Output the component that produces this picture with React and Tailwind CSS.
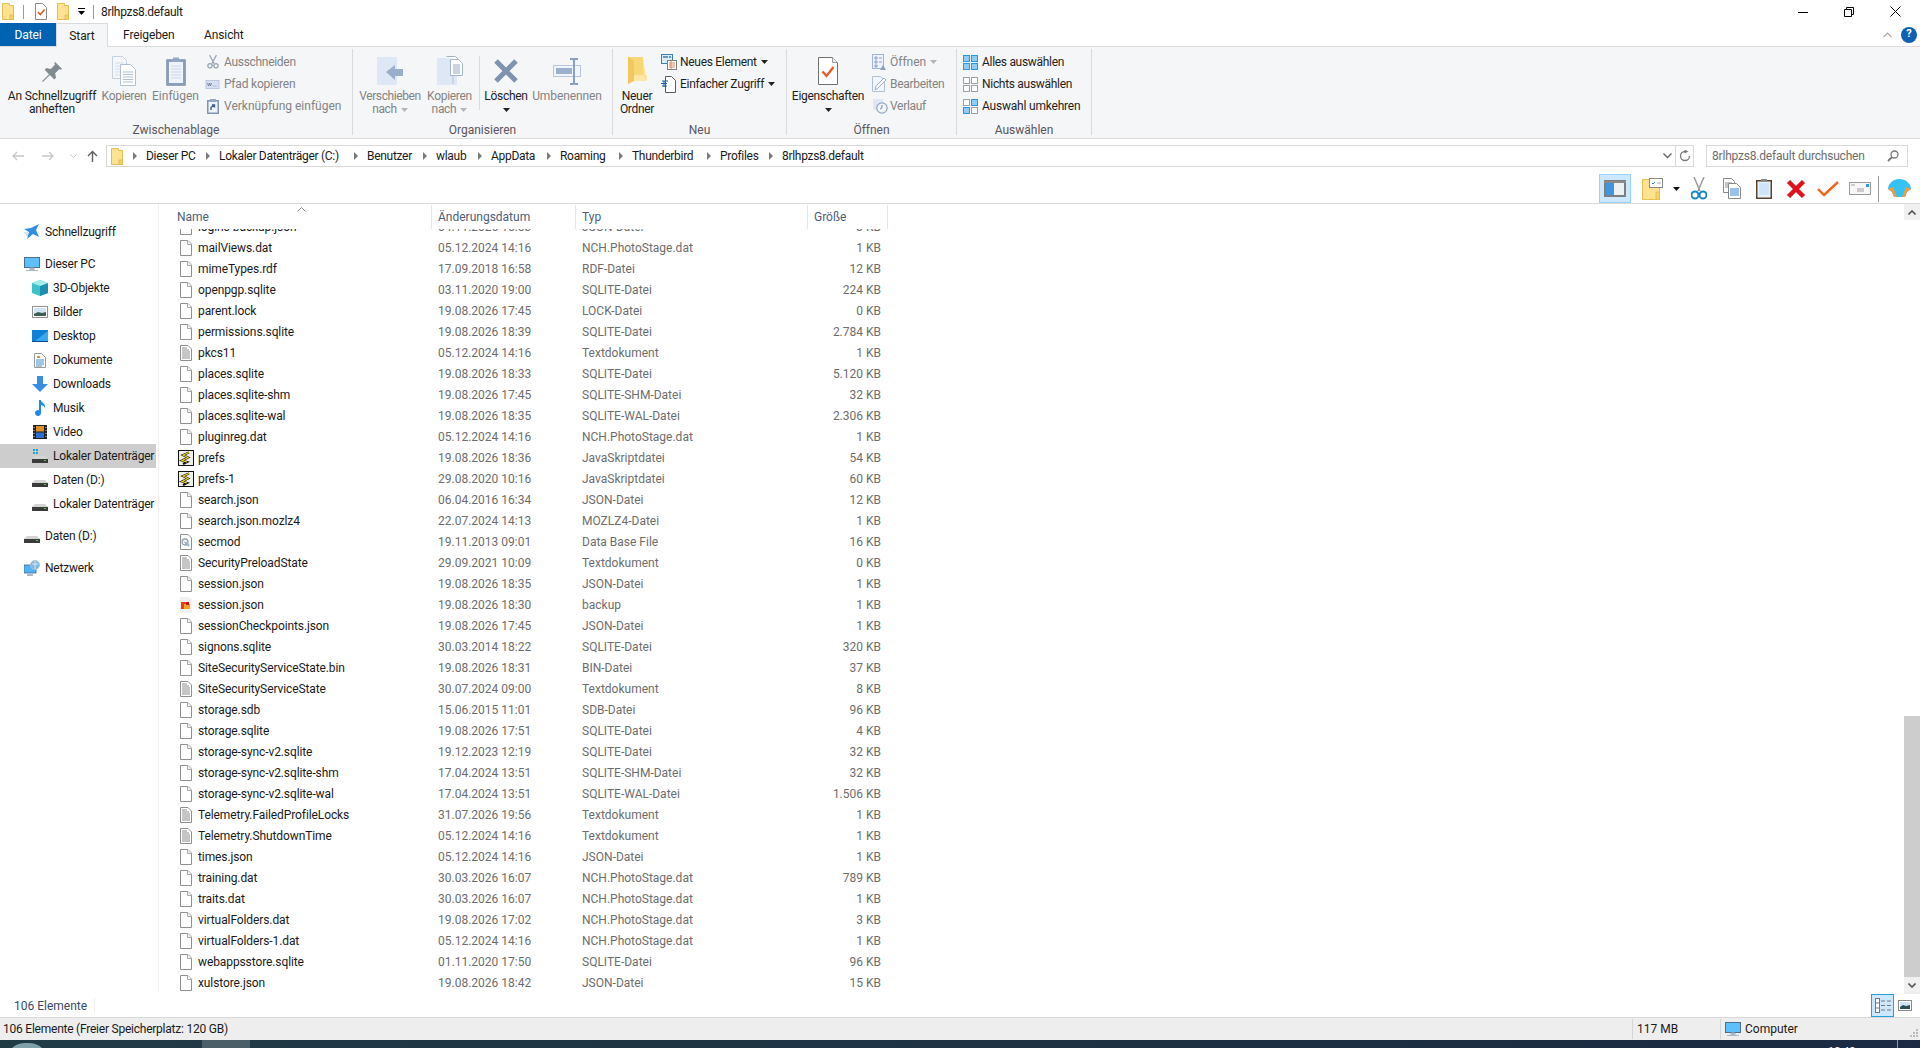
import React from "react";

const I = ({ w, h, vw, vh, children, className = "" }) => (
  <svg width={w} height={h} viewBox={`0 0 ${vw || w} ${vh || h}`} className={`shrink-0 block ${className}`} shapeRendering="geometricPrecision">{children}</svg>
);

const FolderTall = () => (
  <I w={12} h={17}>
    <path d="M.5.5h7v2h4v14h-11z" fill="#fde28f" stroke="#e5bd55" />
    <path d="M8 12h3.500v4.500H8z" fill="#f6cf66" stroke="#e5bd55" />
  </I>
);
const DocCheck = () => (
  <I w={12} h={17}>
    <path d="M.5.5h7l4 4v12H.5z" fill="#fff" stroke="#8a8a8a" />
    <path d="M3 9l2.300 2.500L9.500 6.500" fill="none" stroke="#e8541e" strokeWidth="1.500" />
  </I>
);
const Caret = ({ c = "#222" }) => (
  <I w={7} h={4}><path d="M0 0h7L3.500 4z" fill={c} /></I>
);

const FileIcon = () => (
  <I w={16} h={16}>
    <path d="M2.500.5h7.500l3.500 3.500v11.500h-11z" fill="#fff" stroke="#8f8f8f" />
    <path d="M9.500.5v4h4" fill="#f3f3f3" stroke="#a8a8a8" />
  </I>
);
const TextIcon = () => (
  <I w={16} h={16}>
    <path d="M2.500.5h7.500l3.500 3.500v11.500h-11z" fill="#fff" stroke="#8f8f8f" />
    <path d="M4 5h7M4 7h8M4 9h8M4 11h8M4 13h8" stroke="#8c8c8c" />
    <path d="M4 3h5" stroke="#8c8c8c" />
  </I>
);
const JsIcon = () => (
  <I w={16} h={16}>
    <rect x=".5" y=".5" width="15" height="15" fill="#eeeeee" stroke="#111" />
    <path d="M11 2.500L5 5l5 2.500-6 3 5 1.500-4 2" fill="none" stroke="#111" strokeWidth="2.200" />
    <path d="M11 2.500L5 5l5 2.500-6 3 5 1.500" fill="none" stroke="#f2de1a" strokeWidth="1.100" />
  </I>
);
const DbIcon = () => (
  <I w={16} h={16}>
    <path d="M2.500.5h7.500l3.500 3.500v11.500h-11z" fill="#fff" stroke="#8f8f8f" />
    <circle cx="7" cy="8" r="3" fill="none" stroke="#9aa3ad" strokeWidth="1.300" />
    <path d="M7 8l4 4" stroke="#8ab4dc" strokeWidth="2" />
    <path d="M5 6.500l3.500 3.500" stroke="#b8b8b8" />
  </I>
);
const BackupIcon = () => (
  <I w={16} h={16}>
    <path d="M2 0h9l3 3v13H2z" fill="#f1f1f1" />
    <rect x="3" y="5" width="8" height="7" fill="#f03d10" />
    <rect x="6" y="7" width="6" height="5" fill="#f5a02a" />
    <rect x="8" y="5" width="3" height="3" fill="#c8140f" />
  </I>
);

const fileIcons = { f: FileIcon, t: TextIcon, j: JsIcon, d: DbIcon, b: BackupIcon };

const N = "NCH.PhotoStage.dat", S = "SQLITE-Datei", SH = "SQLITE-SHM-Datei", SW = "SQLITE-WAL-Datei", J = "JSON-Datei", T = "Textdokument", JS = "JavaSkriptdatei";
const files = [
  ["logins-backup.json", "04.11.2026 15:03", J, "3 KB"],
  ["mailViews.dat", "05.12.2024 14:16", N, "1 KB"],
  ["mimeTypes.rdf", "17.09.2018 16:58", "RDF-Datei", "12 KB"],
  ["openpgp.sqlite", "03.11.2020 19:00", S, "224 KB"],
  ["parent.lock", "19.08.2026 17:45", "LOCK-Datei", "0 KB"],
  ["permissions.sqlite", "19.08.2026 18:39", S, "2.784 KB"],
  ["pkcs11", "05.12.2024 14:16", T, "1 KB", "t"],
  ["places.sqlite", "19.08.2026 18:33", S, "5.120 KB"],
  ["places.sqlite-shm", "19.08.2026 17:45", SH, "32 KB"],
  ["places.sqlite-wal", "19.08.2026 18:35", SW, "2.306 KB"],
  ["pluginreg.dat", "05.12.2024 14:16", N, "1 KB"],
  ["prefs", "19.08.2026 18:36", JS, "54 KB", "j"],
  ["prefs-1", "29.08.2020 10:16", JS, "60 KB", "j"],
  ["search.json", "06.04.2016 16:34", J, "12 KB"],
  ["search.json.mozlz4", "22.07.2024 14:13", "MOZLZ4-Datei", "1 KB"],
  ["secmod", "19.11.2013 09:01", "Data Base File", "16 KB", "d"],
  ["SecurityPreloadState", "29.09.2021 10:09", T, "0 KB", "t"],
  ["session.json", "19.08.2026 18:35", J, "1 KB"],
  ["session.json", "19.08.2026 18:30", "backup", "1 KB", "b"],
  ["sessionCheckpoints.json", "19.08.2026 17:45", J, "1 KB"],
  ["signons.sqlite", "30.03.2014 18:22", S, "320 KB"],
  ["SiteSecurityServiceState.bin", "19.08.2026 18:31", "BIN-Datei", "37 KB"],
  ["SiteSecurityServiceState", "30.07.2024 09:00", T, "8 KB", "t"],
  ["storage.sdb", "15.06.2015 11:01", "SDB-Datei", "96 KB"],
  ["storage.sqlite", "19.08.2026 17:51", S, "4 KB"],
  ["storage-sync-v2.sqlite", "19.12.2023 12:19", S, "32 KB"],
  ["storage-sync-v2.sqlite-shm", "17.04.2024 13:51", SH, "32 KB"],
  ["storage-sync-v2.sqlite-wal", "17.04.2024 13:51", SW, "1.506 KB"],
  ["Telemetry.FailedProfileLocks", "31.07.2026 19:56", T, "1 KB", "t"],
  ["Telemetry.ShutdownTime", "05.12.2024 14:16", T, "1 KB", "t"],
  ["times.json", "05.12.2024 14:16", J, "1 KB"],
  ["training.dat", "30.03.2026 16:07", N, "789 KB"],
  ["traits.dat", "30.03.2026 16:07", N, "1 KB"],
  ["virtualFolders.dat", "19.08.2026 17:02", N, "3 KB"],
  ["virtualFolders-1.dat", "05.12.2024 14:16", N, "1 KB"],
  ["webappsstore.sqlite", "01.11.2020 17:50", S, "96 KB"],
  ["xulstore.json", "19.08.2026 18:42", J, "15 KB"],
];

/* ribbon big icons */
const Pin = () => (
  <I w={21} h={21} vw={24} vh={24}>
    <path d="M15 1l8 8-2 1-1-1-5 5 1 5-2 2-5-5-8 8-1-1 8-8-5-5 2-2 5 1 5-5-1-1z" fill="#7f8b8f" />
  </I>
);
const CopyBig = () => (
  <I w={24} h={30}>
    <path d="M.5.5h10l4 4v18H.5z" fill="#f4f7fc" stroke="#c4d1e3" />
    <path d="M3 7h9M3 10h9M3 13h9M3 16h9M3 19h9" stroke="#d3deec" />
    <path d="M8.500 8.500h10l5 5v16h-15z" fill="#fff" stroke="#afc0d6" />
    <path d="M11 16h10M11 18.500h10M11 21h10M11 23.500h10M11 26h10" stroke="#afc0d6" />
  </I>
);
const ClipBig = () => (
  <I w={20} h={30}>
    <rect x=".75" y="3.750" width="18.500" height="25.500" fill="#8aa0bd" stroke="#8094b0" />
    <rect x="3" y="6" width="14" height="21" fill="#eef3fb" />
    <path d="M5 10h10M5 13h10M5 16h10M5 19h10M5 22h10" stroke="#cbd7e8" />
    <path d="M7 4V1.500h6V4h2v2H5V4z" fill="#93a8c4" />
  </I>
);
const ScissorsSm = ({ c = "#98a6b4" }) => (
  <I w={12} h={16} vw={14} vh={16}>
    <path d="M3 0l5.500 10M11 0L5.500 10" stroke={c} strokeWidth="1.400" fill="none" />
    <circle cx="3.500" cy="12.500" r="2.500" fill="none" stroke={c} strokeWidth="1.500" />
    <circle cx="10.500" cy="12.500" r="2.500" fill="none" stroke={c} strokeWidth="1.500" />
  </I>
);
const PathSm = () => (
  <I w={15} h={9} vw={14} vh={9}>
    <rect x=".5" y=".5" width="13" height="8" fill="#d6e2f2" stroke="#b9c8dc" />
    <path d="M2 3l1 3 1-3 1 3 1-3M8 6h.800M10 6h.800" stroke="#5e7695" fill="none" strokeWidth=".8" />
  </I>
);
const LinkSm = () => (
  <I w={12} h={16}>
    <rect x=".75" y="2.750" width="10.500" height="12.500" fill="#eef3fb" stroke="#7f94b0" strokeWidth="1.500" />
    <rect x="3" y="1" width="6" height="3" fill="#93a8c4" />
    <path d="M4 12V9.500L7 7M5 7h2.500v2.500" stroke="#3e5f88" fill="none" strokeWidth="1.400" />
  </I>
);
const MoveBig = () => (
  <I w={26} h={28}>
    <path d="M0 0h20v28H0z" fill="#dde7f5" />
    <path d="M9 15l9-7v4h8v7h-8v4z" fill="#98aecb" />
  </I>
);
const CopyToBig = () => (
  <I w={26} h={30}>
    <path d="M0 2h20v27H0z" fill="#dde7f5" />
    <path d="M17 3h-2v25h2z" fill="#c7d6e9" />
    <path d="M9.500 .5h9l3 3v4.500" fill="#fff" stroke="#a4b6cf" />
    <path d="M13.500 3.500h8l4 4v12h-12z" fill="#fff" stroke="#a4b6cf" />
    <path d="M16 9h7M16 11h7M16 13h7M16 15h7M16 17h7" stroke="#93a8c4" />
  </I>
);
const XBig = () => (
  <I w={26} h={26}>
    <path d="M3 3l20 20M23 3L3 23" stroke="#7f93ae" strokeWidth="5" />
  </I>
);
const RenameBig = () => (
  <I w={28} h={27}>
    <rect x=".5" y="7.500" width="27" height="11" fill="#f2f6fc" stroke="#b6c7dd" />
    <rect x="3" y="10" width="16" height="6" fill="#9ab0cc" />
    <path d="M17 1h3l1 1 1-1h3M21 2v23M17 26h3l1-1 1 1h3" stroke="#88a0bd" fill="none" strokeWidth="2" />
  </I>
);
const FolderBig = () => (
  <I w={20} h={28}>
    <path d="M1 0h15v24H6l-5 3z" fill="#f7d777" />
    <path d="M1 0l6 4v20l-6 3z" fill="#f2c75c" />
    <path d="M7 18h13v6H7z" fill="#fbe6a4" />
    <path d="M16 0v18l3 4" fill="#fbe28f" />
  </I>
);
const NewItem = () => (
  <I w={16} h={16}>
    <rect x=".5" y=".5" width="11" height="9" fill="#d8ecfa" stroke="#3d7fa8" />
    <path d="M2 3h5M8 3h2" stroke="#3d7fa8" strokeWidth="1.500" />
    <rect x="6.500" y="6.500" width="9" height="9" fill="#fff" stroke="#7f7f7f" />
    <path d="M8 9h6M8 11h6M8 13h6M10 7v8" stroke="#d88c6a" />
  </I>
);
const EasyAccess = () => (
  <I w={15} h={17}>
    <path d="M4.500 .5h6l4 4v12h-10z" fill="#fff" stroke="#5a5a5a" />
    <path d="M1 5h6M0 7.500h6M1 10h5M3 5v6" stroke="#1d5fa3" />
  </I>
);
const PropsBig = () => (
  <I w={20} h={28}>
    <path d="M.5.5h14l5 5v22H.5z" fill="#fff" stroke="#6f6f6f" />
    <path d="M14.500 .5v5h5" fill="#efefef" stroke="#9a9a9a" />
    <path d="M4.500 14.500l4 4.500 7-9" fill="none" stroke="#f0561d" strokeWidth="2.200" />
  </I>
);
const OpenSm = () => (
  <I w={14} h={16}>
    <rect x=".5" y=".5" width="11" height="14" fill="#eef3fb" stroke="#a4b6cf" />
    <path d="M3 3h2v2H3zM3 7h2v2H3zM3 11h2v2H3zM7 4h3M7 8h3" stroke="#8aa0bd" fill="none" />
    <path d="M8 16l3-5 3 5z" fill="#8aa0bd" />
  </I>
);
const EditSm = () => (
  <I w={14} h={16}>
    <path d="M.5.5h8l4 4v11H.5z" fill="#f2f6fc" stroke="#b0c0d6" />
    <path d="M3 14l1-4 8-8 2 2-8 8z" fill="#fff" stroke="#9bb0ca" />
  </I>
);
const HistorySm = () => (
  <I w={16} h={16}>
    <rect x="1" y="1" width="10" height="11" fill="#dde7f5" />
    <circle cx="10" cy="10" r="5.200" fill="#f2f6fc" stroke="#93a5bb" strokeWidth="1.200" />
    <path d="M10 7v3l-2 1" stroke="#7c8fa6" fill="none" />
  </I>
);
const SelectIcon = ({ on }) => {
  const cells = [[0, 0], [8, 0], [0, 8], [8, 8]];
  return (
    <I w={15} h={15}>
      {cells.map(([x, y], i) =>
        on.includes(i) ? (
          <rect key={i} x={x + 0.5} y={y + 0.5} width="6" height="6" fill="#8fcdf7" stroke="#2a97e3" />
        ) : (
          <rect key={i} x={x + 0.5} y={y + 0.5} width="6" height="6" fill="#fff" stroke="#a0a0a0" />
        )
      )}
    </I>
  );
};

const Big = ({ w, ml = "", icon, a, b, dim, caret, tr = "tracking-[-0.3px]" }) => (
  <div className={`flex flex-col items-center shrink-0 pt-[5px] ${tr} ${w} ${ml} ${dim ? "text-[#838383]" : "text-[#1e1e1e]"}`}>
    <div className="h-[38px] flex items-center justify-center">{icon}</div>
    <div className="h-[13px] leading-[13px] whitespace-nowrap">{a}</div>
    <div className="h-[13px] leading-[13px] whitespace-nowrap flex items-center gap-1">
      {b}
      {caret && <Caret c={dim ? "#b5b5b5" : "#222"} />}
    </div>
  </div>
);

const Small = ({ icon, text, dim, w, caret, tr = "tracking-[-0.3px]" }) => (
  <div className={`h-[22px] flex items-center whitespace-nowrap ${tr} ${dim ? "text-[#838383]" : "text-[#1e1e1e]"}`}>
    <div className={`${w} flex items-center shrink-0`}>{icon}</div>
    {text}
    {caret && <span className="ml-[4px]"><Caret c={caret} /></span>}
  </div>
);

const Group = ({ w, label, children }) => (
  <div className={`${w} shrink-0 h-full flex flex-col`}>
    <div className="h-[75px] flex">{children}</div>
    <div className="h-[16px] flex items-center justify-center text-[#5a5560]">{label}</div>
  </div>
);
const GroupSep = () => <div className="w-px h-[86px] mt-[2px] bg-[#dadbdc] shrink-0" />;

const Chev = () => (
  <I w={5} h={8}><path d="M1 0l4 4-4 4z" fill="#7a7a7a" /></I>
);

const crumbs = [
  ["Dieser PC", "w-[73px]"],
  ["Lokaler Datenträger (C:)", "w-[148px]"],
  ["Benutzer", "w-[69px]"],
  ["wlaub", "w-[55px]"],
  ["AppData", "w-[69px]"],
  ["Roaming", "w-[72px]"],
  ["Thunderbird", "w-[88px]"],
  ["Profiles", "w-[62px]"],
  ["8rlhpzs8.default", "w-[100px]"],
];

const Star = () => (
  <I w={16} h={16}><path d="M15 0l-3 6 3 7-6-3-6 5 2-7-5-3 7-1z" fill="#2f8de4" /><path d="M4 9H0M4 11H2" stroke="#9cc9f0" /></I>
);
const Monitor = () => (
  <I w={16} h={15}>
    <rect x=".5" y=".5" width="15" height="10" fill="#5dc0fb" stroke="#4d6f8c" />
    <path d="M6 11h4v2H6zM2 13.500h12" stroke="#a5b8c8" fill="#a5b8c8" />
  </I>
);
const Cube = () => (
  <I w={16} h={16}><path d="M8 0l8 3v10l-8 3-8-3V3z" fill="#3cc3c9" /><path d="M8 6l8-3v10l-8 3z" fill="#1a8fb0" /><path d="M8 0l8 3-8 3-8-3z" fill="#a5ecec" /></I>
);
const Pic = () => (
  <I w={16} h={12}><rect x=".5" y=".5" width="15" height="11" fill="#fff" stroke="#8f8f8f" /><rect x="2" y="2" width="12" height="8" fill="#cfe4f5" /><path d="M2 8l4-2 4 1 4-1v4H2z" fill="#3f5f52" /></I>
);
const Desk = () => (
  <I w={16} h={12}><rect width="16" height="12" fill="#0f7fd8" /><path d="M16 1v10H3z" fill="#37a8f5" /><path d="M0 11h16v1H0z" fill="#0a4f8c" /></I>
);
const DocS = () => (
  <I w={12} h={15}><path d="M.5.5h7l4 4v10H.5z" fill="#fff" stroke="#9a9a9a" /><path d="M2 7h8M2 9h8M2 11h8M2 13h6" stroke="#3f8fd0" /><path d="M3 3h3v2H3z" fill="#e48a3c" /></I>
);
const Down = () => (
  <I w={16} h={16}><path d="M5 0h6v8h5l-8 8-8-8h5z" fill="#3a8ee0" /></I>
);
const Note = () => (
  <I w={11} h={16}><path d="M4 0h2c0 3 5 3 4 8-1-2-3-3-4-3v8a3 3 0 11-2-2.800z" fill="#1b8be6" /></I>
);
const Film = () => (
  <I w={14} h={14}><rect width="14" height="14" fill="#222" /><rect x="3" y="1" width="8" height="5.500" fill="#e08f2a" /><rect x="3" y="7.500" width="8" height="5.500" fill="#2c6fd0" /><path d="M1 2v1M1 5v1M1 8v1M1 11v1M13 2v1M13 5v1M13 8v1M13 11v1" stroke="#ddd" /></I>
);
const Drive = ({ win }) => (
  <I w={16} h={16}>
    {win && <path d="M1 1h2v2H1zM4 1h2v2H4zM1 4h2v2H1zM4 4h2v2H4z" fill="#1f9ce8" />}
    <path d="M3 8h10l3 3H0z" fill="#d4d4d4" />
    <rect y="11" width="16" height="4" fill="#3b3b3b" />
    <path d="M12 12.500h2" stroke="#39d353" />
  </I>
);
const Net = () => (
  <I w={16} h={16}>
    <rect x="0" y="5" width="12" height="8" fill="#4fb4f5" stroke="#41698c" strokeWidth=".8" />
    <path d="M3 15h6" stroke="#8fa3b5" strokeWidth="1.500" />
    <circle cx="11" cy="5" r="4.500" fill="#7fb8dd" stroke="#a9c6da" />
    <path d="M8 4h6M11 1v8" stroke="#d9e9f3" />
  </I>
);

const nav = [
  [1, "Schnellzugriff", <Star />, "mt-[16px]"],
  [1, "Dieser PC", <Monitor />, "mt-[8px]"],
  [2, "3D-Objekte", <Cube />],
  [2, "Bilder", <Pic />],
  [2, "Desktop", <Desk />],
  [2, "Dokumente", <DocS />],
  [2, "Downloads", <Down />],
  [2, "Musik", <Note />],
  [2, "Video", <Film />],
  [2, "Lokaler Datenträger", <Drive win />, "", true],
  [2, "Daten (D:)", <Drive />],
  [2, "Lokaler Datenträger", <Drive />],
  [1, "Daten (D:)", <Drive />, "mt-[8px]"],
  [1, "Netzwerk", <Net />, "mt-[8px]"],
];

const cols = {
  a: "w-[273px]",
  b: "w-[144px]",
  c: "w-[232px]",
  d: "w-[80px]",
};

const Head = ({ w, children, pl = "pl-[6px]" }) => (
  <div className={`${w} ${pl} h-[24px] mt-px flex items-center border-r border-[#e5e5e5] text-[#4c607a] shrink-0 relative`}>{children}</div>
);

const TB = ({ children, w, ml }) => <div className={`${w} ${ml} flex items-center justify-center shrink-0`}>{children}</div>;

export default function App() {
  return (
    <div className="w-[1920px] h-[1048px] flex flex-col overflow-hidden bg-white text-[12px] text-[#1a1a1a] [font-family:Roboto,sans-serif]">
      {/* title bar */}
      <div className="h-[23px] flex items-center shrink-0">
        <div className="ml-[2px]"><FolderTall /></div>
        <div className="ml-[9px] w-px h-[14px] bg-[#9a9a9a]" />
        <div className="ml-[11px]"><DocCheck /></div>
        <div className="ml-[10px]"><FolderTall /></div>
        <div className="ml-[9px] flex flex-col items-center gap-[2px]">
          <div className="w-[7px] h-px bg-black" />
          <Caret c="#000" />
        </div>
        <div className="ml-[8px] w-px h-[14px] bg-[#9a9a9a]" />
        <div className="ml-[7px] tracking-[-0.3px]">8rlhpzs8.default</div>
        <div className="ml-auto flex items-center">
          <div className="w-[46px] flex justify-center"><I w={10} h={10}><path d="M0 5.500h10" stroke="#000" /></I></div>
          <div className="w-[46px] flex justify-center"><I w={10} h={10}><path d="M.5 2.500h7v7h-7zM2.500 2.500v-2h7v7h-2" fill="none" stroke="#000" /></I></div>
          <div className="w-[46px] flex justify-center mr-[2px]"><I w={11} h={11}><path d="M.5.5l10 10M10.500.5l-10 10" stroke="#000" /></I></div>
        </div>
      </div>

      {/* tabs */}
      <div className="h-[23px] flex items-stretch shrink-0 tracking-[-0.1px]">
        <div className="w-[56px] bg-[#0063b1] text-white flex items-center justify-center">Datei</div>
        <div className="w-[52px] h-[24px] bg-[#f5f6f7] border border-b-0 border-[#dadbdc] flex items-center justify-center z-10">Start</div>
        <div className="ml-[15px] w-[81px] flex items-center">Freigeben</div>
        <div className="flex items-center">Ansicht</div>
        <div className="ml-auto flex items-center">
          <I w={9} h={6}><path d="M.5 5L4.500 1l4 4" stroke="#a8a8a8" fill="none" strokeWidth="1.200" /></I>
          <div className="ml-[9px] mr-[3px] w-[16px] h-[16px] rounded-full bg-[#0f5fb5] text-white flex items-center justify-center text-[11px] font-bold">?</div>
        </div>
      </div>

      {/* ribbon */}
      <div className="h-[93px] bg-[#f5f6f7] border-y border-[#dadbdc] flex shrink-0">
        <Group w="w-[352px]" label="Zwischenablage">
          <Big w="w-[104px]" icon={<Pin />} a="An Schnellzugriff" b="anheften" tr="tracking-[-0.15px]" />
          <Big w="w-[40px]" icon={<CopyBig />} a="Kopieren" dim />
          <Big w="w-[63px]" icon={<ClipBig />} a="Einfügen" dim tr="tracking-normal" />
          <div className="pt-[4px]">
            <Small w="w-[17px]" dim text="Ausschneiden" icon={<ScissorsSm />} />
            <Small w="w-[17px]" dim text="Pfad kopieren" icon={<span className="-ml-[2px]"><PathSm /></span>} tr="tracking-[-0.2px]" />
            <Small w="w-[17px]" dim text="Verknüpfung einfügen" icon={<LinkSm />} tr="tracking-normal" />
          </div>
        </Group>
        <GroupSep />
        <Group w="w-[259px]" label="Organisieren">
          <Big w="w-[74px]" icon={<MoveBig />} a="Verschieben" b="nach" dim caret tr="tracking-[-0.4px]" />
          <Big w="w-[45px]" icon={<CopyToBig />} a="Kopieren" b="nach" dim caret />
          <div className="ml-[7px] w-px h-[54px] mt-[9px] bg-[#dadbdc]" />
          <Big w="w-[52px]" icon={<XBig />} a="Löschen" b={<Caret />} />
          <Big w="w-[70px]" icon={<RenameBig />} a="Umbenennen" dim tr="tracking-[-0.1px]" />
        </Group>
        <GroupSep />
        <Group w="w-[173px]" label="Neu">
          <Big w="w-[48px]" icon={<FolderBig />} a="Neuer" b="Ordner" />
          <div className="pt-[4px]">
            <Small w="w-[19px]" text="Neues Element" icon={<NewItem />} caret="#222" />
            <Small w="w-[19px]" text="Einfacher Zugriff" icon={<EasyAccess />} caret="#222" />
          </div>
        </Group>
        <GroupSep />
        <Group w="w-[169px]" label="Öffnen">
          <Big w="w-[82px]" icon={<PropsBig />} a="Eigenschaften" b={<Caret />} />
          <div className="ml-[3px] pt-[4px]">
            <Small w="w-[18px]" dim text="Öffnen" icon={<OpenSm />} caret="#b5b5b5" tr="tracking-normal" />
            <Small w="w-[18px]" dim text="Bearbeiten" icon={<EditSm />} />
            <Small w="w-[18px]" dim text="Verlauf" icon={<HistorySm />} />
          </div>
        </Group>
        <GroupSep />
        <Group w="w-[134px]" label="Auswählen">
          <div className="ml-[6px] pt-[4px]">
            <Small w="w-[19px]" text="Alles auswählen" icon={<SelectIcon on={[0, 1, 2, 3]} />} />
            <Small w="w-[19px]" text="Nichts auswählen" icon={<SelectIcon on={[]} />} />
            <Small w="w-[19px]" text="Auswahl umkehren" icon={<SelectIcon on={[1, 2]} />} tr="tracking-[-0.2px]" />
          </div>
        </Group>
        <GroupSep />
      </div>

      {/* address row */}
      <div className="h-[28px] flex pt-[6px] shrink-0">
        <div className="w-[106px] h-[22px] flex items-center shrink-0">
          <div className="ml-[12px]"><I w={12} h={10}><path d="M12 5H1M5 1L1 5l4 4" stroke="#c9c9c9" fill="none" strokeWidth="1.400" /></I></div>
          <div className="ml-[18px]"><I w={12} h={10}><path d="M0 5h11M7 1l4 4-4 4" stroke="#c9c9c9" fill="none" strokeWidth="1.400" /></I></div>
          <div className="ml-[16px]"><I w={7} h={4}><path d="M.5.5l3 3 3-3" stroke="#c9c9c9" fill="none" /></I></div>
          <div className="ml-[10px]"><I w={11} h={12}><path d="M5.500 12V1.500M1 6l4.500-4.500L10 6" stroke="#5f5f5f" fill="none" strokeWidth="1.400" /></I></div>
        </div>
        <div className="w-[1588px] h-[22px] border border-[#d9d9d9] flex items-center shrink-0 tracking-[-0.3px]">
          <div className="ml-[4px] mr-[7px]"><FolderTall /></div>
          {crumbs.map(([t, w], i) => (
            <div key={i} className={`${w} shrink-0 flex items-center whitespace-nowrap`}>
              <span className="w-[8px] shrink-0 flex justify-center mr-[8px]"><Chev /></span>
              {t}
            </div>
          ))}
          <div className="ml-auto flex items-center h-full">
            <I w={9} h={6} className="mr-[3px]"><path d="M.5.500l4 4 4-4" stroke="#666" fill="none" strokeWidth="1.400" /></I>
            <div className="w-px h-full bg-[#d9d9d9]" />
            <div className="w-[17px] flex justify-center">
              <I w={12} h={12}><path d="M6 1.500A4.500 4.500 0 1 0 10.500 6" stroke="#7a7a7a" fill="none" strokeWidth="1.300" /><path d="M5.500 -.5l4 2-4 2z" fill="#7a7a7a" /></I>
            </div>
          </div>
        </div>
        <div className="ml-[12px] w-[202px] h-[22px] border border-[#d9d9d9] flex items-center pl-[5px] text-[#6d6d6d] shrink-0 tracking-[-0.2px]">
          8rlhpzs8.default durchsuchen
          <I w={12} h={12} className="ml-auto mr-[8px]"><circle cx="7.500" cy="4.500" r="3.500" fill="none" stroke="#777" strokeWidth="1.300" /><path d="M5 7l-4 4" stroke="#777" strokeWidth="1.800" /></I>
        </div>
      </div>

      {/* custom toolbar */}
      <div className="h-[37px] flex items-end border-b border-[#dadada] shrink-0">
        <div className="ml-[1599px] w-[32px] h-[29px] bg-[#cce8ff] border border-[#99d1ff] flex items-center justify-center shrink-0">
          <I w={22} h={17}>
            <rect x="1" y="1" width="20" height="15" fill="#eef1f3" stroke="#7e7e7e" strokeWidth="2" />
            <rect x="2" y="3" width="8" height="12" fill="#3e97de" />
            <path d="M0 1h22v2H0z" fill="#8a8a8a" />
          </I>
        </div>
        <div className="h-[29px] flex items-center">
          <TB w="w-[21px]" ml="ml-[11px]">
            <I w={21} h={22}>
              <path d="M.5 1.500h12v2h5v18H.5z" fill="#fde28f" stroke="#e9c24d" />
              <path d="M14 14h3.500v7.500H14z" fill="#f7d265" stroke="#e9c24d" />
              <rect x="7.500" y=".5" width="13" height="9" fill="#fff" stroke="#8a8a8a" />
              <path d="M10 5l1 1 2-2" stroke="#2f86d8" fill="none" /><path d="M15 5h4" stroke="#aaa" />
            </I>
          </TB>
          <TB w="w-[7px]" ml="ml-[10px]"><Caret c="#111" /></TB>
          <TB w="w-[16px]" ml="ml-[11px]">
            <I w={16} h={23}>
              <path d="M3 0l6 14M13 0L7 14" stroke="#9b9b9b" strokeWidth="1.500" />
              <circle cx="4" cy="18" r="3.500" fill="none" stroke="#1a86c8" strokeWidth="2" />
              <circle cx="12" cy="18" r="3.500" fill="none" stroke="#1a86c8" strokeWidth="2" />
            </I>
          </TB>
          <TB w="w-[18px]" ml="ml-[16px]">
            <I w={18} h={21}>
              <path d="M.5.5h8l3 3v11H.5z" fill="#fff" stroke="#8a8a8a" />
              <path d="M2 5h7M2 7h7M2 9h7" stroke="#8a8a8a" />
              <path d="M5.500 5.500h8l4 4v11h-12z" fill="#fff" stroke="#8a8a8a" />
              <path d="M7 11h9M7 13h9M7 15h9M7 17h9" stroke="#3b83dc" />
            </I>
          </TB>
          <TB w="w-[16px]" ml="ml-[15px]">
            <I w={16} h={21}>
              <rect x=".75" y="2.750" width="14.500" height="17.500" fill="#e6f3fd" stroke="#5c432c" strokeWidth="1.500" />
              <path d="M3 6h10M3 8h10M3 10h10M3 12h10M3 14h10M3 16h10" stroke="#b8d6f0" />
              <rect x="5" y="1" width="6" height="3" fill="#8a8a8a" />
            </I>
          </TB>
          <TB w="w-[20px]" ml="ml-[14px]">
            <I w={20} h={20}><path d="M2.500 2.500l15 15M17.500 2.500l-15 15" stroke="#e0101c" strokeWidth="4.500" /></I>
          </TB>
          <TB w="w-[22px]" ml="ml-[11px]">
            <I w={22} h={16}><path d="M1 8l6 6L21 1" fill="none" stroke="#f0651a" strokeWidth="2.400" /></I>
          </TB>
          <TB w="w-[22px]" ml="ml-[10px]">
            <I w={22} h={13}>
              <rect x=".5" y=".5" width="21" height="12" fill="#f7f7f7" stroke="#9a9a9a" />
              <rect x="17" y="2" width="3" height="3" fill="#2f9ae8" />
              <path d="M2 3h4M8 7h7M8 9h7" stroke="#a0a0a0" />
            </I>
          </TB>
          <div className="ml-[7px] w-px h-[26px] bg-[#9a9a9a]" />
          <TB w="w-[23px]" ml="ml-[9px]">
            <I w={23} h={19}>
              <path d="M11.500 0C18 0 23 5 23 10l-4 3-2 5H6l-2-5-4-3C0 5 5 0 11.500 0z" fill="#35c3f5" />
              <path d="M0 10l4 3 2 5h3L5 8M23 10l-4 3-2 5h-3l4-10" fill="#f29c3c" />
            </I>
          </TB>
        </div>
      </div>

      {/* main */}
      <div className="h-[790px] flex shrink-0">
        <div className="w-[159px] h-[789px] border-r border-[#f0f0f0] shrink-0 overflow-hidden tracking-[-0.2px]">
          <div className="w-[156px]">
            {nav.map(([lvl, t, icon, mt = "", sel], i) => (
              <div key={i} className={`h-[24px] flex items-center overflow-hidden whitespace-nowrap ${mt} ${sel ? "bg-[#cdcdcd]" : ""} ${lvl === 1 ? "pl-[24px]" : "pl-[32px]"}`}>
                <div className="w-[21px] shrink-0 flex"><div className="w-[16px] flex justify-center">{icon}</div></div>
                {t}
              </div>
            ))}
          </div>
        </div>

        <div className="flex-1 flex flex-col min-w-0">
          <div className="h-[25px] flex shrink-0">
            <Head w={cols.a} pl="pl-[18px]">
              Name
              <div className="absolute left-[138px] top-[2px]"><I w={9} h={5}><path d="M.5 4.500l4-4 4 4" stroke="#8a8a8a" fill="none" /></I></div>
            </Head>
            <Head w={cols.b}>Änderungsdatum</Head>
            <Head w={cols.c}>Typ</Head>
            <Head w={cols.d}>Größe</Head>
          </div>
          <div className="flex-1 overflow-hidden">
            <div className="-mt-[13px]">
              {files.map(([n, d, t, s, k = "f"], i) => {
                const Ic = fileIcons[k];
                return (
                  <div key={i} className="h-[21px] flex items-center whitespace-nowrap">
                    <div className={`${cols.a} flex items-center pl-[19px] shrink-0`}>
                      <Ic />
                      <span className="ml-[4px] tracking-[-0.1px]">{n}</span>
                    </div>
                    <div className={`${cols.b} pl-[6px] text-[#6d6d6d] shrink-0`}>{d}</div>
                    <div className={`${cols.c} pl-[6px] text-[#6d6d6d] shrink-0`}>{t}</div>
                    <div className={`${cols.d} pr-[7px] text-right text-[#6d6d6d] shrink-0`}>{s}</div>
                  </div>
                );
              })}
            </div>
          </div>
        </div>

        <div className="w-[16px] flex flex-col shrink-0">
          <div className="h-[16px] bg-[#f0f0f0] flex items-center justify-center"><I w={8} h={5}><path d="M.5 4.500L4 1l3.500 3.500" stroke="#555" fill="none" strokeWidth="1.600" /></I></div>
          <div className="h-[496px]" />
          <div className="flex-1 bg-[#cdcdcd]" />
          <div className="h-[17px] bg-[#f0f0f0] flex items-center justify-center"><I w={8} h={5}><path d="M.5.500L4 4l3.500-3.500" stroke="#555" fill="none" strokeWidth="1.600" /></I></div>
        </div>
      </div>

      {/* details bar */}
      <div className="h-[23px] flex items-center shrink-0">
        <div className="w-[95px] h-[15px] pl-[14px] border-r border-[#f0f0f0] flex items-center text-[#3a4a66]">106 Elemente</div>
        <div className="ml-auto w-[23px] h-[23px] bg-[#cce8ff] border border-[#26a0da] flex items-center justify-center">
          <I w={16} h={15}>
            <rect x=".5" y=".5" width="4" height="14" fill="#fff" stroke="#777" />
            <path d="M1 5h3M1 10h3M6 3h4M12 3h4M6 7.500h4M12 7.500h4M6 12h4M12 12h4" stroke="#777" />
          </I>
        </div>
        <div className="ml-[4px] mr-[8px]">
          <I w={14} h={11}>
            <rect x=".5" y=".5" width="13" height="10" fill="#fff" stroke="#8a8a8a" />
            <rect x="2" y="2" width="10" height="7" fill="#cfe4f5" />
            <path d="M2 7l3-2 3 1 4-1v4H2z" fill="#2e4f55" />
          </I>
        </div>
      </div>

      {/* status bar */}
      <div className="h-[23px] bg-[#eeeeee] border-t border-[#d9d9d9] flex items-center shrink-0">
        <div className="pl-[3px] w-[1632px] shrink-0 tracking-[-0.23px]">106 Elemente (Freier Speicherplatz: 120 GB)</div>
        <div className="w-px h-[20px] bg-[#d5d5d5] shrink-0" />
        <div className="pl-[4px] w-[87px] shrink-0">117 MB</div>
        <div className="w-px h-[20px] bg-[#d5d5d5] shrink-0" />
        <div className="ml-[4px]"><Monitor /></div>
        <div className="ml-[4px]">Computer</div>
        <div className="ml-auto mr-[2px] mt-[7px]">
          <I w={8} h={8}><path d="M6 0h2v2H6zM3 3h2v2H3zM6 3h2v2H6zM0 6h2v2H0zM3 6h2v2H3zM6 6h2v2H6z" fill="#bcbcbc" /></I>
        </div>
      </div>

      {/* taskbar */}
      <div className="h-[8px] flex bg-linear-to-r from-[#213b45] to-[#1b2a42] shrink-0 overflow-hidden">
        <div className="ml-[12px] mt-[3px]"><I w={30} h={5}><path d="M0 5C4 1 9 0 15 0s11 1 15 5z" fill="#7fa0a8" /></I></div>
        <div className="ml-[160px] w-[48px] bg-[#4a5f68]" />
        <div className="ml-[1578px] mt-[5px] text-white text-[11px] leading-[14px]">18:42</div>
        <div className="ml-[42px] w-px bg-[#8a98a8]" />
      </div>
    </div>
  );
}
